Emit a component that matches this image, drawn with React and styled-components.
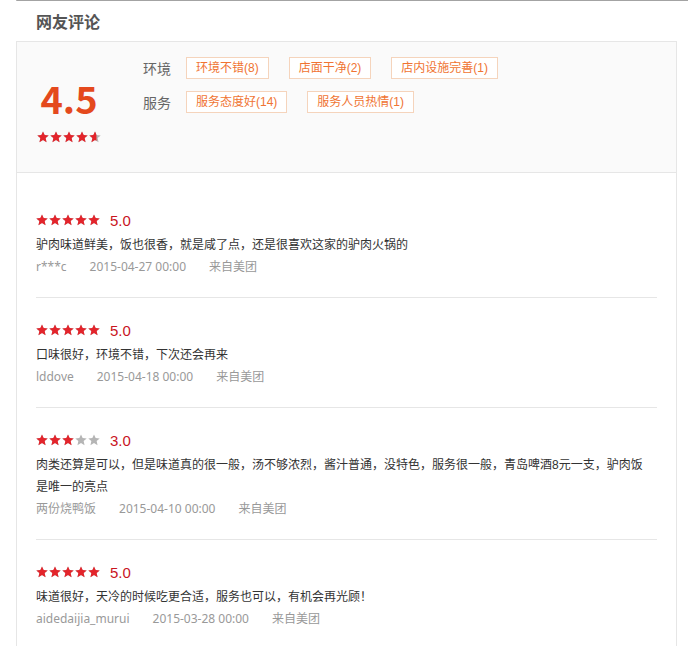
import React, { useId } from "react";
import styled, { createGlobalStyle } from "styled-components";

const GlobalStyle = createGlobalStyle`
  body {
    margin: 0;
    background: #fff;
    font-family: "Liberation Sans", "Noto Sans CJK SC", sans-serif;
    color: #333;
  }
`;

const Page = styled.div`
  width: 688px;
  height: 646px;
  overflow: hidden;
  display: flex;
  flex-direction: column;
`;

const TopRule = styled.div`
  height: 1px;
  margin-left: 16px;
  border-left: 1px solid #cfcfcf;
  border-bottom: 1px solid #a3a3a3;
`;

const Title = styled.h2`
  margin: 0;
  height: 40px;
  line-height: 40px;
  padding-left: 36px;
  font-size: 16px;
  font-weight: bold;
  color: #555;
  font-family: "Noto Sans CJK SC", sans-serif;
`;

const Board = styled.div`
  flex: 1;
  margin: 0 11px 0 16px;
  border: 1px solid #e6e6e6;
  border-bottom: none;
  display: flex;
  flex-direction: column;
`;

const Summary = styled.div`
  height: 130px;
  background: #fafafa;
  border-bottom: 1px solid #e6e6e6;
  display: flex;
  align-items: flex-start;
`;

const ScoreBlock = styled.div`
  margin: 35px 0 0 20px;
  width: 64px;
  display: flex;
  flex-direction: column;
  align-items: center;
  gap: 12px;
`;

const BigScore = styled.div`
  font-size: 38px;
  line-height: 42px;
  font-weight: bold;
  color: #e4491d;
  font-family: "Noto Sans CJK SC", sans-serif;
`;

const TagGroups = styled.div`
  margin: 15px 0 0 42px;
  display: flex;
  flex-direction: column;
  gap: 12px;
`;

const TagRow = styled.div`
  display: flex;
  align-items: center;
  gap: 20px;
`;

const TagLabel = styled.span`
  font-size: 14px;
  color: #666;
  width: 28px;
  margin-right: -5px;
  font-family: "Noto Sans CJK SC", sans-serif;
`;

const Tag = styled.span`
  height: 20px;
  line-height: 20px;
  padding: 0 9px;
  border: 1px solid #f5d4bc;
  background: #fff;
  color: #f07432;
  font-size: 12px;
`;

const List = styled.div`
  padding: 15px 19px 0 19px;
`;

const Review = styled.div`
  padding: 20px 0 19px;
  border-top: ${(p) => (p.$first ? "none" : "1px solid #e6e6e6")};
`;

const RateRow = styled.div`
  height: 24px;
  margin-bottom: 2px;
  display: flex;
  align-items: center;
  gap: 10px;
`;

const RateNum = styled.span`
  font-size: 15px;
  color: #c9151e;
`;

const Body = styled.p`
  margin: 0;
  padding-right: 10px;
  font-size: 12px;
  line-height: 22px;
  color: #333;
`;

const Meta = styled.div`
  font-family: "Noto Sans", "Noto Sans CJK SC", sans-serif;
  font-size: 12px;
  line-height: 22px;
  color: #999;
  display: flex;
  gap: 23px;
`;

const Foot = styled.div`
  height: 3px;
  background: linear-gradient(to right, #e3e4dc, #eeeeea 40%, #e1e2da);
  border-top: 1px solid #d6d7cf;
`;

const STAR = "M6 0.4 L7.65 4.1 L11.7 4.45 L8.65 7.1 L9.55 11.2 L6 9.1 L2.45 11.2 L3.35 7.1 L0.3 4.45 L4.35 4.1 Z";

function Star({ fill }) {
  const id = useId();
  return (
    <svg width="12" height="12" viewBox="0 0 12 12">
      <defs>
        <clipPath id={id}>
          <rect x="0" y="0" width={12 * fill} height="12" />
        </clipPath>
      </defs>
      <path d={STAR} fill="#b5b5b5" />
      <path d={STAR} fill="#e3242b" clipPath={`url(#${id})`} />
    </svg>
  );
}

const StarRow = styled.span`
  display: inline-flex;
  gap: 1px;
`;

// half star is drawn a bit past the middle, like the original sprite
const starFill = (value, i) => {
  const f = Math.max(0, Math.min(1, value - i));
  return f > 0 && f < 1 ? 0.62 : f;
};

function Stars({ value }) {
  return (
    <StarRow>
      {[0, 1, 2, 3, 4].map((i) => (
        <Star key={i} fill={starFill(value, i)} />
      ))}
    </StarRow>
  );
}

const tags = [
  { label: "环境", items: ["环境不错(8)", "店面干净(2)", "店内设施完善(1)"] },
  { label: "服务", items: ["服务态度好(14)", "服务人员热情(1)"] },
];

const reviews = [
  {
    score: 5,
    text: "驴肉味道鲜美，饭也很香，就是咸了点，还是很喜欢这家的驴肉火锅的",
    user: "r***c",
    time: "2015-04-27 00:00",
  },
  {
    score: 5,
    text: "口味很好，环境不错，下次还会再来",
    user: "lddove",
    time: "2015-04-18 00:00",
  },
  {
    score: 3,
    text: "肉类还算是可以，但是味道真的很一般，汤不够浓烈，酱汁普通，没特色，服务很一般，青岛啤酒8元一支，驴肉饭是唯一的亮点",
    user: "两份烧鸭饭",
    time: "2015-04-10 00:00",
  },
  {
    score: 5,
    text: "味道很好，天冷的时候吃更合适，服务也可以，有机会再光顾！",
    user: "aidedaijia_murui",
    time: "2015-03-28 00:00",
  },
];

export default function App() {
  return (
    <Page>
      <GlobalStyle />
      <TopRule />
      <Title>网友评论</Title>
      <Board>
        <Summary>
          <ScoreBlock>
            <BigScore>4.5</BigScore>
            <Stars value={4.5} />
          </ScoreBlock>
          <TagGroups>
            {tags.map((g) => (
              <TagRow key={g.label}>
                <TagLabel>{g.label}</TagLabel>
                {g.items.map((t) => (
                  <Tag key={t}>{t}</Tag>
                ))}
              </TagRow>
            ))}
          </TagGroups>
        </Summary>
        <List>
          {reviews.map((r, i) => (
            <Review key={i} $first={i === 0}>
              <RateRow>
                <Stars value={r.score} />
                <RateNum>{r.score.toFixed(1)}</RateNum>
              </RateRow>
              <Body>{r.text}</Body>
              <Meta>
                <span>{r.user}</span>
                <span>{r.time}</span>
                <span>来自美团</span>
              </Meta>
            </Review>
          ))}
        </List>
      </Board>
      <Foot />
    </Page>
  );
}
